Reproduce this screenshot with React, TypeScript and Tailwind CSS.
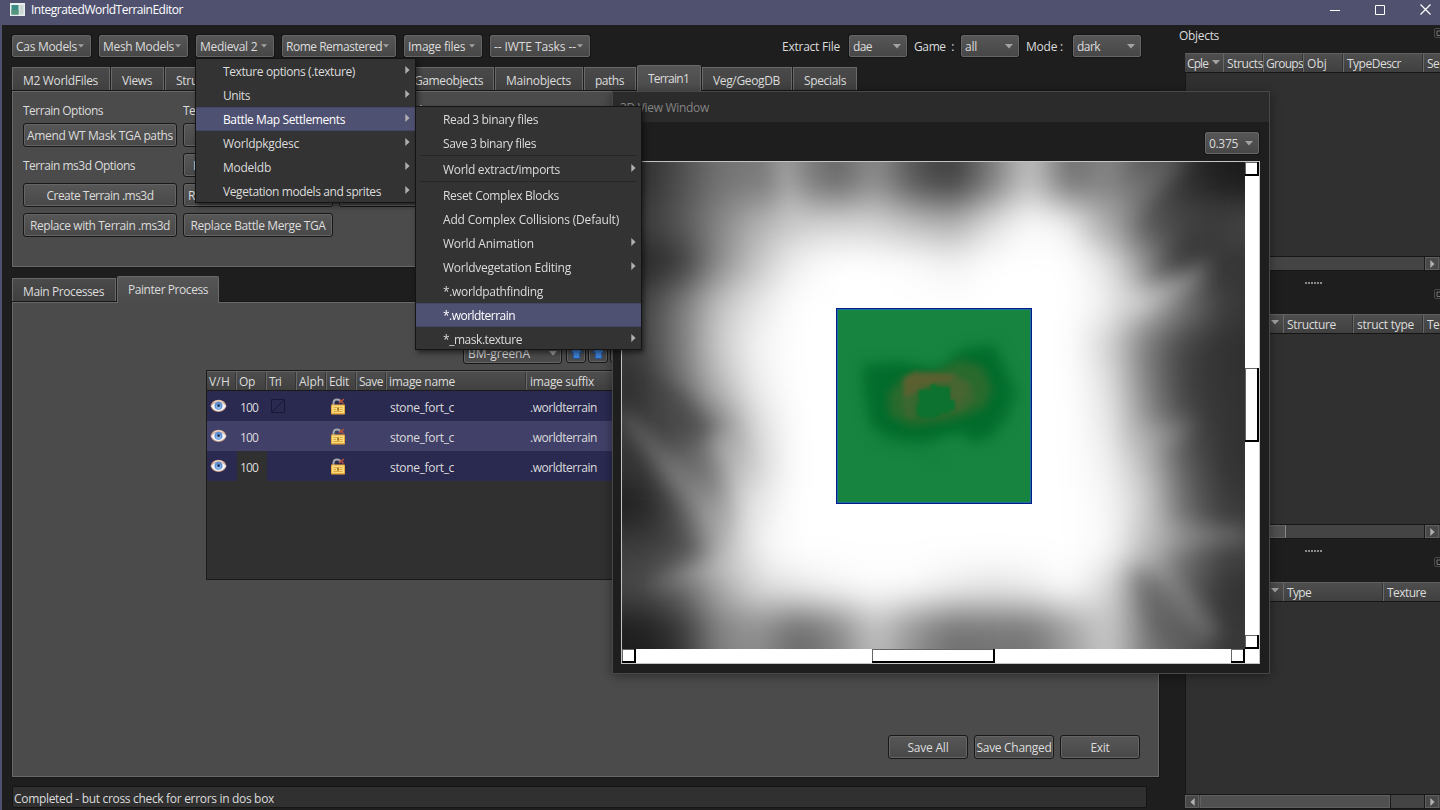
import React, { useLayoutEffect, useRef, useState } from "react";

/** Single-line label whose letter spacing is adjusted so that it fills `w` pixels. */
function T({ children, w, className = "" }: { children: string; w: number; className?: string }) {
  const ref = useRef<HTMLSpanElement>(null);
  const [spacing, setSpacing] = useState(0);
  useLayoutEffect(() => {
    if (ref.current) {
      const natural = ref.current.getBoundingClientRect().width;
      setSpacing((w - natural) / children.length);
    }
  }, [children, w]);
  return (
    <span ref={ref} className={"inline-block shrink-0 justify-self-start pt-[2px] whitespace-pre " + className} style={{ letterSpacing: `${spacing}px` }}>
      {children}
    </span>
  );
}

const Down = ({ className = "" }: { className?: string }) => (
  <svg className={"shrink-0 " + className} width="8" height="5" viewBox="0 0 8 5">
    <path d="M0 0h8L4 4.6z" fill="#a3a3a3" />
  </svg>
);
const Right = ({ className = "" }: { className?: string }) => (
  <svg className={"shrink-0 " + className} width="5" height="8" viewBox="0 0 5 8">
    <path d="M0.3 0L4.6 4L0.3 8z" fill="#b0b0b0" />
  </svg>
);

function ToolButton({ label, tw, className }: { label: string; tw: number; className: string }) {
  return (
    <div className={"flex h-[22px] items-center rounded-[2px] border border-[#666] bg-linear-to-b from-[#565656] to-[#474747] pl-[3px] shadow-[0_0_0_1px_#151515] " + className}>
      <T w={tw}>{label}</T>
      <Down className="-mt-px ml-px h-[4px] w-[6px]" />
    </div>
  );
}

function Combo({ label, tw, className }: { label: string; tw: number; className: string }) {
  return (
    <div className={"flex h-[22px] items-center justify-between rounded-[2px] border border-[#666] bg-linear-to-b from-[#565656] to-[#474747] pr-[5px] pl-[3px] shadow-[0_0_0_1px_#151515] " + className}>
      <T w={tw}>{label}</T>
      <Down />
    </div>
  );
}

function Tab({ label, tw, className, active = false }: { label: string; tw: number; className: string; active?: boolean }) {
  return (
    <div
      className={
        "flex shrink-0 items-center border-x border-t border-[#696969] pl-[10px] " +
        (active
          ? "relative z-10 -mb-px h-[27px] rounded-t-[2px] bg-linear-to-b from-[#565656] to-[#4b4b4b] pb-[2px] "
          : "mb-px h-[23px] bg-linear-to-b from-[#4a4a4a] to-[#404040] pt-px ") +
        className
      }
    >
      {label && <T w={tw}>{label}</T>}
    </div>
  );
}

function Push({ label = "", tw = 0, className = "" }: { label?: string; tw?: number; className?: string }) {
  return (
    <div className={"flex h-[24px] items-center justify-center rounded-[3px] border border-[#181818] bg-linear-to-b from-[#575757] to-[#484848] shadow-[inset_0_0_0_1px_#646464] " + className}>
      {label && <T w={tw}>{label}</T>}
    </div>
  );
}

function MenuItem({ label, tw, sub = false, active = false }: { label: string; tw: number; sub?: boolean; active?: boolean }) {
  return (
    <div
      className={
        "flex h-[24px] items-center justify-between pr-[5px] pl-[27px] " +
        (active ? "bg-[#4f5172] text-white shadow-[inset_0_1px_0_#434668,inset_0_-1px_0_#434668]" : "")
      }
    >
      <T w={tw}>{label}</T>
      {sub && <Right className="-mt-0.5" />}
    </div>
  );
}

const MenuLine = () => <div className="mx-1 h-[2px] border-t border-[#262626]" />;

const Eye = () => (
  <svg width="17" height="14" viewBox="0 0 17 14">
    <path d="M0.5 7Q2 1 8.5 0.8Q15 1 16.5 7Q14.5 12.8 8.5 13Q2.500 12.800 .5 7z" fill="#c99f86" />
    <path d="M1.200 7.300Q4 3 8.500 2.900Q13.500 3 16 7.300Q13 12 8.500 12Q4 12 1.200 7.300z" fill="#f4f6fb" />
    <path d="M2 4.500Q5 .8 9 1.300Q13 1.500 15 4.500Q11.500 2.500 8.500 2.600Q5 2.600 2 4.500z" fill="#f1d9c9" />
    <circle cx="8.500" cy="6.800" r="4" fill="#5f8fd2" />
    <circle cx="8.500" cy="7.800" r="2.600" fill="#86b4ea" />
    <rect x="7.500" y="5.500" width="2.200" height="2.200" fill="#0a1830" />
  </svg>
);

const Lock = () => (
  <svg width="16" height="17" viewBox="0 0 16 17">
    <path d="M3.500 7V4.500Q3.800 1.500 7 1.500Q10 1.500 10.500 4" fill="none" stroke="#a4a6ad" strokeWidth="2" />
    <path d="M9 5L14 1M10 2l3.500 3.500" stroke="#b2503e" strokeWidth="1.600" />
    <rect x="1" y="6.500" width="14" height="10" rx="0.800" fill="#e9a93c" />
    <rect x="2" y="7.500" width="12" height="7.500" fill="#fbdc7d" />
    <path d="M3.500 9.500h4M9.500 9.500h3M3.500 11.500h2.500M9.500 11.500h3M3.500 13.500h9" stroke="#dda23a" strokeWidth="0.900" />
    <rect x="7.300" y="9.500" width="1.500" height="3.200" fill="#8c5c15" />
  </svg>
);

const UpArrow = () => (
  <svg width="13" height="13" viewBox="0 0 13 13">
    <path d="M6.500 .5L12.500 6.500H9.800V12.500H3.200V6.500H.5z" fill="#3f82d8" stroke="#204f96" strokeWidth=".8" />
  </svg>
);

const Float = ({ className = "" }: { className?: string }) => (
  <svg className={"shrink-0 " + className} width="6" height="10" viewBox="0 0 6 10">
    <path d="M7 .5H2Q.5 .5 .5 2V8Q.5 9.500 2 9.500H7" fill="none" stroke="#4a4a4a" />
    <path d="M7 3H3V7.500H7" fill="none" stroke="#777" />
  </svg>
);

/* Grey levels of the height map, one value per cell. */
const heights: number[][] = [
  [45, 78, 115, 122, 142, 100, 145, 85, 62, 125, 200, 108, 138, 85, 48, 28],
  [58, 88, 135, 178, 205, 212, 210, 190, 175, 222, 252, 240, 165, 85, 68, 72],
  [38, 55, 140, 200, 242, 255, 255, 252, 242, 255, 255, 255, 228, 140, 62, 52],
  [62, 120, 195, 232, 255, 255, 255, 255, 255, 255, 255, 255, 240, 185, 120, 58],
  [62, 122, 205, 245, 255, 255, 255, 255, 255, 255, 255, 255, 212, 120, 65, 48],
  [48, 112, 185, 240, 255, 255, 255, 255, 255, 255, 255, 255, 228, 128, 62, 50],
  [58, 72, 130, 222, 255, 255, 255, 255, 255, 255, 255, 255, 235, 150, 75, 50],
  [52, 100, 128, 215, 255, 255, 255, 255, 255, 255, 255, 255, 242, 188, 90, 50],
  [32, 80, 155, 236, 255, 255, 255, 255, 255, 255, 255, 255, 248, 205, 105, 58],
  [62, 80, 178, 245, 255, 255, 255, 255, 255, 255, 255, 255, 250, 190, 115, 70],
  [72, 105, 170, 218, 234, 246, 252, 250, 238, 230, 238, 254, 215, 115, 98, 50],
  [30, 52, 130, 145, 105, 132, 195, 145, 112, 118, 118, 160, 205, 122, 92, 55],
];

function Terrain() {
  const cw = 623 / 16;
  const ch = 487 / 12;
  const cells: React.ReactNode[] = [];
  for (let j = -1; j <= 12; j++) {
    for (let i = -1; i <= 16; i++) {
      const v = heights[Math.min(11, Math.max(0, j))][Math.min(15, Math.max(0, i))];
      cells.push(<rect key={`${i}:${j}`} x={i * cw} y={j * ch} width={cw + 0.6} height={ch + 0.6} fill={`rgb(${v},${v},${v})`} />);
    }
  }
  return (
    <svg className="block" width="623" height="487" viewBox="0 0 623 487">
      <defs>
        <filter id="soft" filterUnits="userSpaceOnUse" x="-40" y="-42" width="703" height="571" colorInterpolationFilters="sRGB">
          <feGaussianBlur stdDeviation="17" />
        </filter>
        <filter id="ray" filterUnits="userSpaceOnUse" x="-60" y="-60" width="743" height="607" colorInterpolationFilters="sRGB">
          <feGaussianBlur stdDeviation="9" />
        </filter>
        <filter id="b3" x="-20%" y="-20%" width="140%" height="140%" colorInterpolationFilters="sRGB">
          <feGaussianBlur stdDeviation="7" />
        </filter>
        <filter id="b2" x="-30%" y="-30%" width="160%" height="160%" colorInterpolationFilters="sRGB">
          <feGaussianBlur stdDeviation="5" />
        </filter>
        <filter id="b1" x="-30%" y="-30%" width="160%" height="160%" colorInterpolationFilters="sRGB">
          <feGaussianBlur stdDeviation="2" />
        </filter>
        <filter id="b0" x="-30%" y="-30%" width="160%" height="160%" colorInterpolationFilters="sRGB">
          <feGaussianBlur stdDeviation="0.8" />
        </filter>
      </defs>
      <g filter="url(#soft)">{cells}</g>
      <g filter="url(#ray)">
        <path d="M-10 245L20 262L105 350L95 375L70 355z" fill="#b8b8b8" opacity="0.3" />
        <path d="M20 215L60 225L95 270L70 280z" fill="#202020" opacity="0.25" />
        <path d="M85 275L110 270L150 350L130 375z" fill="#f0f0f0" opacity="0.25" />
        <path d="M20 425L70 402L140 385L130 415z" fill="#d8d8d8" opacity="0.25" />
        <path d="M5 340L80 385L75 398L20 375z" fill="#303030" opacity="0.25" />
        <path d="M490 125L520 132L590 95L575 125L510 155z" fill="#e8e8e8" opacity="0.3" />
        <path d="M520 120L590 40L622 60L580 100z" fill="#303030" opacity="0.3" />
        <path d="M455 70L540 -10L570 -5L490 85z" fill="#b0b0b0" opacity="0.22" />
        <path d="M520 355L625 366L625 380L525 392z" fill="#c8c8c8" opacity="0.25" />
        <path d="M505 265L575 256L560 280L510 300z" fill="#c8c8c8" opacity="0.22" />
        <path d="M520 390L540 395L600 470L580 480z" fill="#d0d0d0" opacity="0.22" />
        <path d="M505 405L525 412L560 480L530 480z" fill="#303030" opacity="0.2" />
        <path d="M150 -10L172 -10L180 60L160 60z" fill="#ddd" opacity="0.25" />
      </g>
      <rect x="214.500" y="146.500" width="195" height="195" fill="#17853f" stroke="#031c88" />
      <rect x="215.500" y="147.500" width="193" height="193" fill="none" stroke="#1c6fa0" />
      <g filter="url(#b3)">
        <path d="M240 202L280 200L318 208L338 188L372 182L386 212L392 228L388 250L370 275L352 281L336 270L302 282L266 277L248 264L242 230z" fill="#026c2c" />
        <path d="M368 222L396 228L398 236L370 240z" fill="#04702f" opacity="0.700" />
      </g>
      <g filter="url(#b2)">
        <path d="M266 232L280 216L312 210L338 198L360 204L370 226L364 244L348 252L330 258L290 264L268 254z" fill="#2a6a2d" />
      </g>
      <path d="M250 282L285 286L322 303" stroke="#0f7838" strokeWidth="4" fill="none" opacity="0.5" filter="url(#b2)" />
      <g filter="url(#b1)">
        <path d="M281 215L292 209L335 212L350 222L352 238L338 250L328 249L326 230L318 222L300 225L293 238L292 256L284 256L280 240z" fill="#3c6730" />
        <path d="M282 217L292 211L332 212L332 219L312 222L300 226L292 231L282 236z" fill="#5a6030" />
        <path d="M328 216L346 222L344 234L334 244L328 240z" fill="#476530" />
      </g>
      <path d="M297 228h12v-6h5v3h14v13h5v10h-5v3h-7l-8 5h-14l-4 -4v-9h2z" fill="#0d712f" filter="url(#b0)" />
    </svg>
  );
}

const Bevel = ({ className }: { className: string }) => (
  <div className={"border-r-2 border-b-2 border-black bg-white shadow-[inset_1px_1px_0_#666] " + className} />
);

const rowBg = ["bg-[#2a2a51]", "bg-[#414068]", "bg-[#2a2a51]"];

function Head({ label, tw, className, pad = "pl-[2px]" }: { label: string; tw: number; className: string; pad?: string }) {
  return (
    <div className={"flex h-full shrink-0 items-center overflow-hidden border-r border-[#686868] shadow-[inset_-1px_0_0_#353535] " + pad + " " + className}>
      {label && <T w={tw}>{label}</T>}
    </div>
  );
}

function LayerTable() {
  return (
    <div className="ml-[193px] h-[210px] w-[940px] border border-[#1a1a1a] bg-[#303030]">
      <div className="flex h-[20px] border-t border-b border-t-[#606060] border-b-[#1a1a1a] bg-linear-to-b from-[#4e4e4e] to-[#404040]">
        <Head label="V/H" tw={21} className="w-[30px]" />
        <Head label="Op" tw={16} className="w-[30px]" />
        <Head label="Tri" tw={12} className="w-[30px]" />
        <Head label="Alph" tw={25} className="w-[30px]" />
        <Head label="Edit" tw={20} className="w-[30px]" />
        <Head label="Save" tw={24} className="w-[30px]" />
        <Head label="image name" tw={66} className="w-[140px]" />
        <Head label="image suffix" tw={64} className="w-[140px]" pad="pl-[3px]" />
      </div>
      {rowBg.map((bg, i) => (
        <div key={i} className={"flex h-[30px] items-center " + bg}>
          <div className="w-[30px] pl-[3px]"><Eye /></div>
          <div className={"flex h-full w-[30px] items-center pt-0.5 pl-[3px] " + (i === 2 ? "bg-[#303030]" : "")}>
            <T w={18}>100</T>
          </div>
          <div className="w-[60px] pl-1">
            {i === 0 && (
              <svg width="14" height="14" viewBox="0 0 14 14">
                <path d="M.5 .5H13.500V13.500H.5zM1 13L13 1" fill="none" stroke="#181836" />
              </svg>
            )}
          </div>
          <div className="w-[60px] pl-[3px]"><Lock /></div>
          <div className="w-[140px] pt-0.5 pl-[3px]"><T w={64}>stone_fort_c</T></div>
          <div className="pt-0.5 pl-[3px]"><T w={67}>.worldterrain</T></div>
        </div>
      ))}
    </div>
  );
}

function Dots({ className }: { className: string }) {
  return (
    <div className={"flex gap-px pl-[120px] " + className}>
      {[0, 1, 2, 3, 4, 5].map((n) => (
        <i key={n} className="h-[2px] w-[2px] bg-[#8a8a8a]" />
      ))}
    </div>
  );
}

const ScrollRight = () => (
  <div className="flex h-full w-[14px] items-center justify-center border border-[#606060] bg-[#484848] shadow-[-1px_0_0_#1a1a1a]">
    <Right />
  </div>
);

const dockHead = "flex h-[20px] border-t border-b border-t-[#606060] border-b-[#151515] bg-linear-to-b from-[#4e4e4e] to-[#404040]";

export default function App() {
  return (
    <div className="relative flex h-[810px] w-[1440px] flex-col overflow-hidden bg-[#1e1e1e] font-['Open_Sans','Noto_Sans',sans-serif] text-[12px] leading-4 text-[#dcdcdc] [font-stretch:88%]">
      <header className="flex h-[25px] shrink-0 items-center justify-between bg-[#4f516f] pr-[9px] pb-[6px] pl-[10px] text-white">
        <div className="flex items-center gap-[6px]">
          <svg width="15" height="13" viewBox="0 0 15 13">
            <rect width="15" height="13" fill="#e9eeee" />
            <rect x="1.500" y="2" width="7" height="9.500" fill="#3d8d86" />
            <rect x="1.500" y="7" width="7" height="4.500" fill="#57957c" />
            <rect x="9.500" y="2" width="4" height="9.500" fill="#c9d6d2" />
          </svg>
          <T w={152} className="pb-px">IntegratedWorldTerrainEditor</T>
        </div>
        <div className="flex items-center gap-[35px]">
          <svg width="10" height="10"><path d="M0 5.500h10" stroke="#fff" /></svg>
          <svg width="10" height="10"><path d="M.5 .5h9v9h-9z" fill="none" stroke="#fff" /></svg>
          <svg width="11" height="11"><path d="M.5 .5l10 10M10.500 .5l-10 10" stroke="#fff" strokeWidth="1.200" /></svg>
        </div>
      </header>

      <div className="flex min-h-0 flex-1">
        <div className="w-[2px] shrink-0 bg-[#4f516f]" />
        <main className="flex w-[1175px] shrink-0 flex-col pl-[10px]">
          <div className="flex h-[40px] shrink-0 items-start gap-[8px] pt-[10px]">
            <ToolButton label="Cas Models" tw={61} className="w-[79px]" />
            <ToolButton label="Mesh Models" tw={71} className="w-[89px]" />
            <ToolButton label="Medieval 2 " tw={60} className="w-[78px]" />
            <ToolButton label="Rome Remastered" tw={96} className="w-[114px]" />
            <ToolButton label="Image files " tw={60} className="w-[78px]" />
            <ToolButton label="-- IWTE Tasks --" tw={82} className="w-[100px]" />
            <div className="ml-[184px] flex h-[22px] items-center">
              <T w={58}>Extract File</T>
              <Combo label="dae" tw={19} className="ml-[9px] w-[58px]" />
              <T w={40} className="ml-[7px]">Game  :</T>
              <Combo label="all" tw={12} className="ml-[7px] w-[58px]" />
              <T w={37} className="ml-[7px]">Mode :</T>
              <Combo label="dark" tw={23} className="ml-[10px] w-[68px]" />
            </div>
          </div>

          <div className="flex h-[26px] shrink-0 items-end gap-px">
            <Tab label="M2 WorldFiles" tw={75} className="w-[98px]" />
            <Tab label="Views" tw={30} className="w-[53px]" />
            <Tab label="Structures" tw={55} className="w-[76px]" />
            <Tab label="" tw={0} className="w-[160px]" />
            <Tab label="Gameobjects" tw={69} className="w-[91px]" />
            <Tab label="Mainobjects" tw={65} className="w-[88px]" />
            <Tab label="paths" tw={29} className="w-[52px]" />
            <Tab label="Terrain1" tw={41} className="w-[64px]" active />
            <Tab label="Veg/GeogDB" tw={67} className="w-[90px]" />
            <Tab label="Specials" tw={42} className="w-[64px]" />
          </div>
          <section className="h-[176px] w-[1147px] shrink-0 border border-[#696969] bg-[#4b4b4b] pl-[10px] shadow-[0_0_0_1px_#161616]">
            <div className="grid h-[31px] grid-cols-[154px_150px_150px] items-center gap-x-[6px] pt-[4px]">
              <T w={80}>Terrain Options</T>
              <T w={80}>Terrain Options</T>
              <T w={88}>Terrain Height Edit</T>
            </div>
            <div className="grid auto-rows-[24px] grid-cols-[154px_150px_150px] items-center gap-[6px]">
              <Push label="Amend WT Mask TGA paths" tw={146} />
              <Push />
              <span />
              <T w={112}>Terrain ms3d Options</T>
              <Push className="justify-start pl-[9px]" label="I" tw={4} />
              <span />
              <Push label="Create Terrain .ms3d" tw={107} />
              <Push label="Replace Vertex Merge TGA" tw={140} />
              <Push />
              <Push label="Replace with Terrain .ms3d" tw={140} />
              <Push label="Replace Battle Merge TGA" tw={135} />
            </div>
          </section>

          <div className="mt-[9px] flex h-[26px] shrink-0 items-end gap-px">
            <Tab label="Main Processes" tw={81} className="w-[104px]" />
            <Tab label="Painter Process" tw={80} className="w-[102px]" active />
          </div>
          <section className="flex h-[475px] w-[1147px] shrink-0 flex-col border border-[#696969] bg-[#4b4b4b] shadow-[0_0_0_1px_#161616]">
            <div className="ml-[450px] flex h-[67px] shrink-0 items-end gap-[2px] pb-[6px]">
              <div className="mr-[2px] flex h-[22px] w-[99px] items-center justify-between rounded-[3px] border border-[#181818] bg-[#4b4b4b] pr-1 pl-[4px] shadow-[inset_0_0_0_1px_#646464]">
                <T w={62}>BM-greenA</T>
                <Down />
              </div>
              {[0, 1, 2].map((n) => (
                <div key={n} className="mb-px flex h-[21px] w-[20px] items-center justify-center rounded-[3px] border border-[#181818] bg-[#4b4b4b] shadow-[inset_0_0_0_1px_#646464]">
                  <UpArrow />
                </div>
              ))}
            </div>
            <LayerTable />
            <div className="mt-[155px] ml-[875px] flex gap-[6px]">
              <Push label="Save All" tw={41} className="w-[80px]" />
              <Push label="Save Changed" tw={75} className="w-[80px]" />
              <Push label="Exit" tw={19} className="w-[80px]" />
            </div>
          </section>
          <footer className="mt-[9px] flex h-[22px] w-[1135px] shrink-0 items-center rounded-[2px] border border-[#141414] bg-[#303030] pt-px pl-[1px]">
            <T w={260}>Completed - but cross check for errors in dos box</T>
          </footer>
        </main>

        <aside className="flex min-w-0 flex-1 flex-col pl-[8px]">
          <div className="-ml-[6px] flex h-[28px] shrink-0 items-start justify-between pt-px">
            <T w={40}>Objects</T>
            <Float className="mt-0.5" />
          </div>
          <div className={dockHead + " shrink-0"}>
            <div className="flex w-[39px] shrink-0 overflow-hidden border-r border-[#686868] pl-[2px]">
              <div className="w-[22px] overflow-hidden"><T w={21}>Cple</T></div>
              <Down className="mt-[6px] ml-[3px]" />
            </div>
            <Head label="Structs" tw={36} className="w-[40px]" pad="pl-[3px]" />
            <Head label="Groups" tw={37} className="w-[40px]" />
            <Head label="Obj" tw={20} className="w-[40px]" pad="pl-[3px]" />
            <Head label="TypeDescr" tw={54} className="w-[80px]" pad="pl-[3px]" />
            <Head label="Se" tw={12} className="w-[40px]" pad="pl-[3px]" />
          </div>
          <div className="h-[183px] shrink-0 border-l border-[#171717] bg-[#303030]" />
          <div className="flex h-[15px] shrink-0 justify-end border-y border-[#171717] bg-[#444] pr-px"><ScrollRight /></div>
          <Dots className="h-[18px] shrink-0 pt-[11px]" />
          <div className="flex h-[25px] shrink-0 justify-end"><Float /></div>
          <div className={dockHead + " shrink-0"}>
            <div className="flex w-[99px] shrink-0 justify-end border-r border-[#686868] pt-[5px] pr-1"><Down /></div>
            <Head label="Structure" tw={49} className="w-[70px]" pad="pl-[3px]" />
            <Head label="struct type" tw={57} className="w-[70px]" pad="pl-[3px]" />
            <Head label="Te" tw={12} className="w-[60px]" pad="pl-[3px]" />
          </div>
          <div className="h-[190px] shrink-0 border-l border-[#171717] bg-[#303030]" />
          <div className="flex h-[15px] shrink-0 justify-between border-y border-[#171717] bg-[#444] pr-px">
            <div className="w-[101px] border border-[#606060] border-r-[#888] bg-[#505050]" />
            <ScrollRight />
          </div>
          <Dots className="h-[18px] shrink-0 pt-[11px]" />
          <div className="flex h-[25px] shrink-0 justify-end"><Float /></div>
          <div className={dockHead + " shrink-0"}>
            <div className="flex w-[99px] shrink-0 justify-end border-r border-[#686868] pt-[5px] pr-1"><Down /></div>
            <Head label="Type" tw={24} className="w-[100px]" pad="pl-[3px]" />
            <Head label="Texture" tw={39} className="w-[60px]" pad="pl-[3px]" />
          </div>
          <div className="h-[192px] shrink-0 border-l border-[#171717] bg-[#303030]" />
          <div className="flex h-[15px] shrink-0 justify-between border-y border-[#171717] bg-[#444] pr-px">
            <div className="flex">
              <div className="flex w-[14px] items-center justify-center border border-[#606060] bg-[#484848]">
                <Right className="rotate-180" />
              </div>
              <div className="ml-px w-[190px] border border-[#606060] bg-[#505050] shadow-[1px_0_0_#1a1a1a]" />
            </div>
            <ScrollRight />
          </div>
        </aside>
      </div>

      {/* 3D view window */}
      <div className="absolute top-[91px] left-[612px] z-20 flex h-[583px] w-[658px] flex-col border border-[#484848] bg-[#1e1e1e] shadow-[0_2px_10px_rgba(0,0,0,0.4)]">
        <div className="flex h-[30px] shrink-0 items-center bg-[#2b2b2b] pl-[7px] text-[#838383]">
          <T w={89}>3D View Window</T>
        </div>
        <div className="flex h-[39px] shrink-0 justify-end pt-[10px] pr-[10px]">
          <Combo label="0.375" tw={29} className="w-[54px]" />
        </div>
        <div className="ml-[8px] flex h-[503px] w-[639px] flex-col border border-[#c4c4c4] bg-white">
          <div className="flex h-[487px]">
            <Terrain />
            <div className="flex w-[14px] flex-col items-stretch">
              <Bevel className="h-[14px]" />
              <Bevel className="mt-[192px] h-[74px]" />
              <Bevel className="mt-auto h-[14px]" />
            </div>
          </div>
          <div className="flex h-[14px] w-[623px]">
            <Bevel className="w-[14px]" />
            <Bevel className="ml-[236px] w-[123px]" />
            <Bevel className="ml-auto w-[14px]" />
          </div>
        </div>
      </div>

      {/* Open menu and its submenu */}
      <div className="absolute top-[58px] left-[195px] z-30 h-[145px] w-[221px] border border-[#141414] bg-[#333] shadow-[2px_3px_5px_rgba(0,0,0,0.5)]">
        <MenuItem label="Texture options (.texture)" tw={132} sub />
        <MenuItem label="Units" tw={27} sub />
        <MenuItem label="Battle Map Settlements" tw={122} sub active />
        <MenuItem label="Worldpkgdesc" tw={76} sub />
        <MenuItem label="Modeldb" tw={48} sub />
        <MenuItem label="Vegetation models and sprites" tw={158} sub />
      </div>
      <div className="absolute top-[106px] left-[415px] z-40 h-[244px] w-[227px] border border-[#141414] bg-[#333] shadow-[2px_3px_5px_rgba(0,0,0,0.5)]">
        <MenuItem label="Read 3 binary files" tw={95} />
        <MenuItem label="Save 3 binary files" tw={93} />
        <MenuLine />
        <MenuItem label="World extract/imports" tw={117} sub />
        <MenuLine />
        <MenuItem label="Reset Complex Blocks" tw={116} />
        <MenuItem label="Add Complex Collisions (Default)" tw={176} />
        <MenuItem label="World Animation" tw={91} sub />
        <MenuItem label="Worldvegetation Editing" tw={128} sub />
        <MenuItem label="*.worldpathfinding" tw={100} />
        <MenuItem label="*.worldterrain" tw={72} active />
        <MenuItem label="*_mask.texture" tw={79} sub />
      </div>
    </div>
  );
}
